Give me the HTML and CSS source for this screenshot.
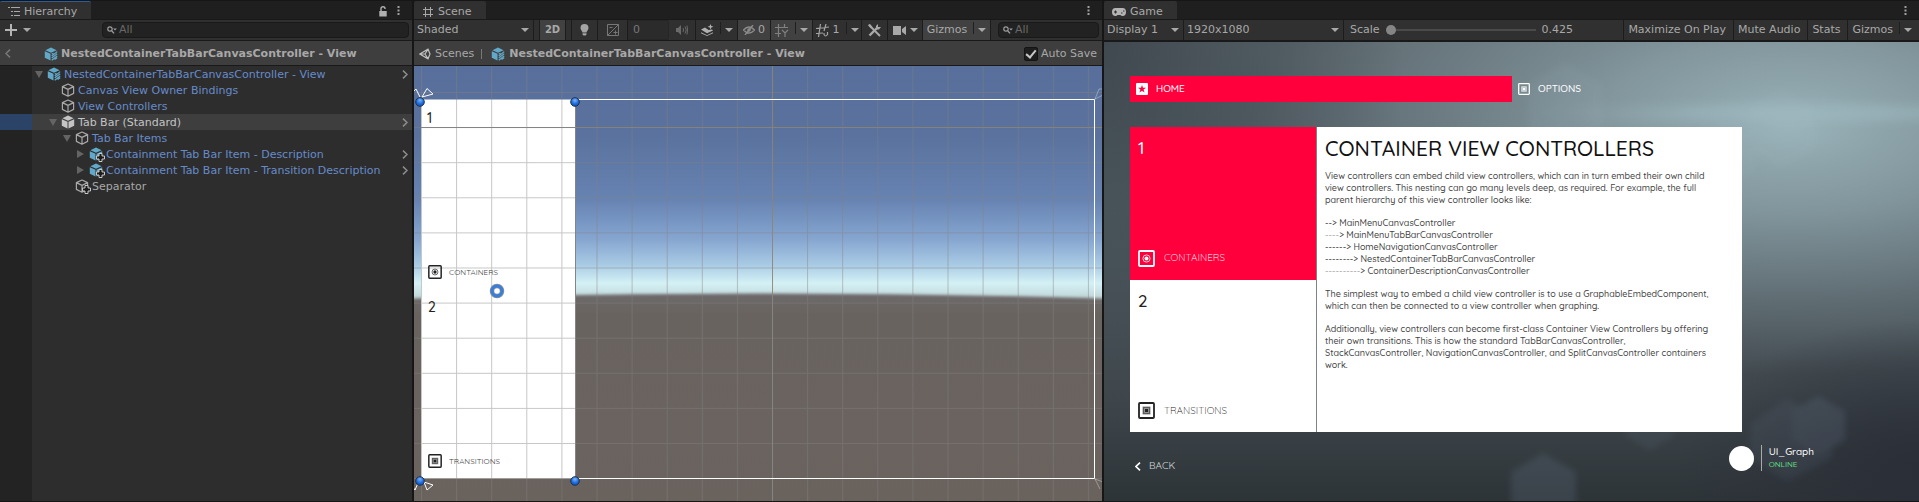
FILE: index.html
```
<!DOCTYPE html>
<html lang="en">
<head>
<meta charset="utf-8">
<title>Editor</title>
<link rel="stylesheet" href="styles.css">
</head>
<body>
<svg class="defs" aria-hidden="true">
  <defs>
    <symbol id="cube-outline" viewBox="0 0 14 14"><path d="M7 1 12.6 3.6V10.4L7 13.2 1.4 10.4V3.6ZM1.4 3.6 7 6.4 12.6 3.6M7 6.4V13.2" fill="none" stroke="#a8a8a8" stroke-width="1.2" stroke-linejoin="round"/></symbol>
    <symbol id="cube-solid" viewBox="0 0 14 14"><path d="M7 .6 12.6 3.2 7 5.8 1.4 3.2ZM.8 4.2 6.5 6.8V13.6L.8 10.8ZM13.2 4.2 7.5 6.8V13.6L13.2 10.8Z" fill="#c4c4c4"/></symbol>
    <symbol id="cube-blue" viewBox="0 0 14 14"><path d="M7 .6 12.6 3.2 7 5.8 1.4 3.2ZM.8 4.2 6.5 6.8V13.6L.8 10.8ZM13.2 4.2 7.5 6.8V13.6L13.2 10.8Z" fill="#62a9c9"/></symbol>
    <symbol id="cube-variant" viewBox="0 0 14 14"><path d="M7 .6 12.6 3.2 7 5.8 1.4 3.2ZM.8 4.2 6.5 6.8V13.6L.8 10.8Z" fill="#62a9c9"/><path d="M7.7 7 9.5 6.2M7.7 9 13.2 4.6M7.7 11 13.2 6.8M7.7 13.2 13.2 9M10.6 12.4 13.2 10.8" stroke="#62a9c9" stroke-width="1.2"/></symbol>
    <symbol id="plus-badge" viewBox="0 0 9 9"><path d="M3 .5h3V3h2.500v3H6v2.500H3V6H.5V3H3z" fill="#1c1c1c" stroke="#c8c8c8"/></symbol>
    <symbol id="search" viewBox="0 0 10 8"><circle cx="3" cy="3" r="2.2" fill="none" stroke="#a0a0a0" stroke-width="1.2"/><path d="M4.6 4.6 7 7.4" stroke="#a0a0a0" stroke-width="1.4"/><path d="M6.2 2.6h3.6L8 4.6z" fill="#a0a0a0"/></symbol>
    <symbol id="dots" viewBox="0 0 3 10"><path d="M0.5 0h2v2h-2zM.5 3.5h2v2h-2zM.5 7h2v2h-2z" fill="#a0a0a0"/></symbol>
    <symbol id="chev" viewBox="0 0 6 9"><path d="M1 .6 5 4.5 1 8.4" fill="none" stroke="#8c8c8c" stroke-width="1.5"/></symbol>
    <symbol id="box-square" viewBox="0 0 17 17"><rect x="1" y="1" width="15" height="15" rx="1" fill="none" stroke="currentColor" stroke-width="1.8"/><rect x="4.5" y="4.5" width="8" height="8" fill="currentColor" opacity=".5"/><rect x="5.5" y="5.5" width="6" height="6" fill="none" stroke="currentColor" opacity=".5"/><rect x="7" y="7" width="3" height="3" fill="currentColor"/></symbol>
    <symbol id="box-round" viewBox="0 0 17 17"><rect x="1" y="1" width="15" height="15" rx="1" fill="none" stroke="currentColor" stroke-width="1.8"/><circle cx="8.5" cy="8.5" r="3.6" fill="none" stroke="currentColor" opacity=".8"/><circle cx="8.5" cy="8.5" r="2" fill="currentColor"/></symbol>
  </defs>
</svg>

<main class="editor">
  <section class="panel hierarchy">
    <header class="tabstrip">
      <h2 class="tab tab-focus"><svg width="12" height="10" viewBox="0 0 12 10"><path d="M0 .5h2M3 .5h9M3 4.5h2M6 4.5h6M3 8.5h2M6 8.5h6" stroke="#a8a8a8" stroke-width="1.2"/></svg>Hierarchy</h2>
      <div class="tab-tools">
        <button class="icon-btn" aria-label="Lock"><svg width="8" height="11" viewBox="0 0 8 11"><path d="M2 5V2.6Q2 .8 4 .8T6 2.6V3" fill="none" stroke="#b0b0b0" stroke-width="1.4"/><path d="M.3 5h7.4v5.5H.3z" fill="#b0b0b0"/></svg></button>
        <button class="icon-btn" aria-label="Menu"><svg width="3" height="10"><use href="#dots"/></svg></button>
      </div>
    </header>
    <div class="toolbar">
      <button class="icon-btn add" aria-label="Create"><svg width="12" height="12" viewBox="0 0 12 12"><path d="M6 0v12M0 6h12" stroke="#b4b4b4" stroke-width="2"/></svg><i class="caret"></i></button>
      <label class="search wide"><svg width="10" height="8"><use href="#search"/></svg><input type="text" placeholder="All" aria-label="Search hierarchy"></label>
    </div>
    <div class="crumbs">
      <button class="icon-btn back-btn" aria-label="Back"><svg width="6" height="9" viewBox="0 0 6 9"><path d="M5 .6 1 4.5 5 8.4" fill="none" stroke="#777" stroke-width="1.5"/></svg></button>
      <svg width="14" height="14"><use href="#cube-variant"/></svg>
      <strong>NestedContainerTabBarCanvasController - View</strong>
    </div>
    <ul class="tree">
      <li class="row l0"><i class="fold open"></i><span class="ic"><svg width="14" height="14"><use href="#cube-variant"/></svg></span><span class="name">NestedContainerTabBarCanvasController - View</span><svg class="go" width="6" height="9"><use href="#chev"/></svg></li>
      <li class="row l1"><i class="fold"></i><span class="ic"><svg width="14" height="14"><use href="#cube-outline"/></svg></span><span class="name">Canvas View Owner Bindings</span></li>
      <li class="row l1"><i class="fold"></i><span class="ic"><svg width="14" height="14"><use href="#cube-outline"/></svg></span><span class="name">View Controllers</span></li>
      <li class="row l1 selected"><i class="fold open"></i><span class="ic"><svg width="14" height="14"><use href="#cube-solid"/></svg></span><span class="name">Tab Bar (Standard)</span><svg class="go" width="6" height="9"><use href="#chev"/></svg></li>
      <li class="row l2"><i class="fold open"></i><span class="ic"><svg width="14" height="14"><use href="#cube-outline"/></svg></span><span class="name">Tab Bar Items</span></li>
      <li class="row l3"><i class="fold closed"></i><span class="ic"><svg width="14" height="14"><use href="#cube-blue"/></svg><svg class="plus" width="9" height="9"><use href="#plus-badge"/></svg></span><span class="name">Containment Tab Bar Item - Description</span><svg class="go" width="6" height="9"><use href="#chev"/></svg></li>
      <li class="row l3"><i class="fold closed"></i><span class="ic"><svg width="14" height="14"><use href="#cube-blue"/></svg><svg class="plus" width="9" height="9"><use href="#plus-badge"/></svg></span><span class="name">Containment Tab Bar Item - Transition Description</span><svg class="go" width="6" height="9"><use href="#chev"/></svg></li>
      <li class="row l2 plain"><i class="fold"></i><span class="ic"><svg width="14" height="14"><use href="#cube-outline"/></svg><svg class="plus" width="9" height="9"><use href="#plus-badge"/></svg></span><span class="name">Separator</span></li>
    </ul>
  </section>

  <section class="panel scene">
    <header class="tabstrip">
      <h2 class="tab"><svg width="12" height="12" viewBox="0 0 12 12"><path d="M3.5 1v10M8.5 1v10M1 3.5h10M1 8.5h10" stroke="#a8a8a8"/></svg>Scene</h2>
      <div class="tab-tools"><button class="icon-btn" aria-label="Menu"><svg width="3" height="10"><use href="#dots"/></svg></button></div>
    </header>
    <div class="toolbar">
      <span class="pick shading"><select aria-label="Shading mode"><option>Shaded</option></select></span>
      <button class="tool two-d on">2D</button>
      <button class="tool light" aria-label="Lighting"><svg width="9" height="12" viewBox="0 0 9 12"><path d="M4.5 0a4 4 0 0 1 4 4c0 2-1.5 2.600-2 4.500h-4C2 6.600.5 6 .5 4a4 4 0 0 1 4-4zM2.500 9.200h4v1.200l-1 1.200h-2l-1-1.200z" fill="#a4a4a4"/></svg></button>
      <button class="tool expo" aria-label="Exposure"><svg width="12" height="12" viewBox="0 0 12 12"><path d="M.5.5h11v11H.5zM.5 11.500 11.500.5M2.500 3.500h3M6.500 8.500h4M8.500 6.500v4" fill="none" stroke="#777"/></svg></button>
      <input class="level" type="text" value="0" aria-label="Exposure value">
      <button class="tool audio" aria-label="Audio"><svg width="12" height="10" viewBox="0 0 12 10"><path d="M0 3h2l3-3v10l-3-3H0z" fill="#6a6a6a"/><path d="M7 3q1.200 2 0 4M9 1.500q2.500 3.500 0 7M11 .5q1 4.500 0 9" fill="none" stroke="#6a6a6a"/></svg></button>
      <button class="tool fx" aria-label="Effects"><svg width="13" height="12" viewBox="0 0 13 12"><path d="M0 5.500 4 3.500 7.500 6 11 5.500 12 6.500 6 9.300ZM0 8.300 6 11.200 12 8.300V9.300L6 12 0 9.300ZM9.500 0l.8 2 2.200.7-2.200.8-.8 2-.8-2-2.200-.8 2.200-.7z" fill="#b0b0b0"/></svg><i class="caret split"></i></button>
      <button class="tool hidden-count on"><svg width="12" height="10" viewBox="0 0 12 10"><path d="M.5 5Q6-1 11.500 5 6 11 .5 5ZM2 10 10 0" fill="none" stroke="#8c8c8c" stroke-width="1.300"/><circle cx="6" cy="5" r="1.800" fill="#8c8c8c"/></svg>0</button>
      <button class="tool axis on" aria-label="Grid axis"><svg width="14" height="13" viewBox="0 0 14 13"><path d="M3.500 0v13M9.500 0v4M0 3.500h13M0 9.500h6M7 6l3 3 3-3M10 9v4" fill="none" stroke="#808080" stroke-width="1.200"/></svg><i class="caret split"></i></button>
      <button class="tool snap"><svg width="13" height="13" viewBox="0 0 13 13"><path d="M4.500 0 2.500 13M10 0 8 7M0 4.500 13 3M0 9.500 7 9M8 9v1.500q1.500 3 3.500 0V8" fill="none" stroke="#a4a4a4" stroke-width="1.200"/></svg>1<i class="caret split"></i></button>
      <button class="tool tools" aria-label="Tools"><svg width="13" height="13" viewBox="0 0 13 13"><path d="M1 1 12 12" stroke="#a8a8a8" stroke-width="2"/><path d="M1.500 11.500 9 4" stroke="#a8a8a8" stroke-width="2.400"/><path d="M8 4.500V2l2-2v3h3l-2 2.500H9zM0 1l2-1 2.500 3L3 4.500z" fill="#a8a8a8"/></svg></button>
      <button class="tool cam" aria-label="Camera"><svg width="13" height="9" viewBox="0 0 13 9"><path d="M0 0h8v9H0zM9 3l4-3v9L9 6z" fill="#a8a8a8"/></svg><i class="caret"></i></button>
      <button class="tool gizmo on">Gizmos<i class="caret split"></i></button>
      <label class="search"><svg width="10" height="8"><use href="#search"/></svg><input type="text" placeholder="All" aria-label="Search scene"></label>
    </div>
    <div class="crumbs scene-crumbs">
      <svg width="12" height="12" viewBox="0 0 12 12"><path d="M.8 6 9 1.200 11 6 9 10.800ZM.8 6H6M9 1.200 6 6 9 10.800" fill="none" stroke="#c0c0c0" stroke-width="1.200"/></svg>
      <a href="#">Scenes</a><i class="bar"></i>
      <svg width="14" height="14"><use href="#cube-variant"/></svg>
      <strong>NestedContainerTabBarCanvasController - View</strong>
      <label class="autosave"><input type="checkbox" checked>Auto Save</label>
    </div>
    <div class="viewport">
      <svg class="view" viewBox="414 66 688 435" preserveAspectRatio="xMidYMid slice" role="img" aria-label="Scene view">
        <defs>
          <linearGradient id="sky" x1="0" y1="66" x2="0" y2="297" gradientUnits="userSpaceOnUse">
            <stop offset="0" stop-color="#576f9a"/><stop offset=".3" stop-color="#5a729d"/><stop offset=".58" stop-color="#6783b2"/><stop offset=".75" stop-color="#86a6d0"/><stop offset=".86" stop-color="#a9cae4"/><stop offset=".94" stop-color="#d4f1f5"/><stop offset="1" stop-color="#c2d8da"/>
          </linearGradient>
          <linearGradient id="ground" x1="0" y1="294" x2="0" y2="501" gradientUnits="userSpaceOnUse">
            <stop offset="0" stop-color="#6d686a"/><stop offset=".1" stop-color="#69645f"/><stop offset="1" stop-color="#6a625d"/>
          </linearGradient>
          <radialGradient id="knob" cx=".5" cy=".3" r=".7"><stop offset="0" stop-color="#7db4f5"/><stop offset=".6" stop-color="#1c6ce0"/><stop offset="1" stop-color="#0d50b8"/></radialGradient>
          <filter id="haze"><feGaussianBlur stdDeviation="0 1.600"/></filter>
          <pattern id="grid" x="421" y="92" width="35.100" height="35.100" patternUnits="userSpaceOnUse"><path d="M.5 0V35.100M0 .5H35.100" stroke="#808080" stroke-opacity=".45"/></pattern>
        </defs>
        <rect x="414" y="66" width="688" height="435" fill="url(#sky)"/>
        <path d="M394 299Q760 288 1122 299V520H394Z" fill="url(#ground)" filter="url(#haze)"/>
        <path d="M421 99.500H575.500V478.500H421Z" fill="#fff"/>
        <rect x="414" y="66" width="688" height="435" fill="url(#grid)"/>
        <path d="M772.500 66V294M576 127.500H1102" stroke="#8f8470" stroke-opacity=".8"/>
        <path d="M772.500 294V501M421 127.500H576M575.500 102V478" stroke="#848484"/>
        <path d="M576 99.500H1094.500V478.500H576" fill="none" stroke="#fff"/>
        <g fill="none" stroke="#fff">
          <path d="M422 97 427 88.500 433 94ZM420 97 416 89 413 92M424 482 433 485 427 490ZM418 483 415 490 412 486"/>
          <path d="M1095 99 1099 89H1103M1095 99 1103 95M1095 479 1103 482M1095 479 1100 489" opacity=".35"/>
        </g>
        <g fill="url(#knob)" stroke="#1e3350"><circle cx="420" cy="102" r="4.300"/><circle cx="575" cy="102" r="4.300"/><circle cx="420" cy="481" r="4.300"/><circle cx="575" cy="481" r="4.300"/></g>
        <circle cx="497" cy="291" r="5" fill="#fff" stroke="#8a8f98" stroke-width="4.500"/><circle cx="497" cy="291" r="5" fill="none" stroke="#3a7edb" stroke-width="3"/>
        <g color="#222"><use href="#box-round" x="428" y="265" width="14" height="14"/><use href="#box-square" x="428" y="454" width="14" height="14"/></g>
        <g class="scene-text"><text x="427" y="123" class="scene-num">1</text><text x="428" y="312" class="scene-num">2</text><text x="449" y="275">CONTAINERS</text><text x="449" y="464">TRANSITIONS</text></g>
      </svg>
    </div>
  </section>

  <section class="panel game">
    <header class="tabstrip">
      <h2 class="tab"><svg width="14" height="8" viewBox="0 0 14 8"><path d="M3.500 0h7a3.500 4 0 0 1 0 8Q9 8 8.500 7h-3Q5 8 3.500 8a3.500 4 0 0 1 0-8Z" fill="#b4b4b4"/><path d="M2 4h3M3.500 2.500v3M9 5h1.500M11 3h1.500" stroke="#303030" stroke-width="1.200"/></svg>Game</h2>
      <div class="tab-tools"><button class="icon-btn" aria-label="Menu"><svg width="3" height="10"><use href="#dots"/></svg></button></div>
    </header>
    <div class="toolbar">
      <span class="pick display"><select aria-label="Display"><option>Display 1</option></select></span>
      <span class="pick size"><select aria-label="Resolution"><option>1920x1080</option></select></span>
      <label class="scale">Scale<input type="range" min="0" max="100" value="0"><output>0.425</output></label>
      <button class="tool">Maximize On Play</button>
      <button class="tool">Mute Audio</button>
      <button class="tool">Stats</button>
      <button class="tool">Gizmos<i class="caret split"></i></button>
    </div>
    <div class="stage">
      <svg class="backdrop" viewBox="1104 42 815 459" preserveAspectRatio="xMidYMid slice" aria-hidden="true">
        <defs>
          <linearGradient id="base" x1="0" y1="0" x2="0" y2="1"><stop offset="0" stop-color="#5c686e"/><stop offset=".35" stop-color="#56636a"/><stop offset=".75" stop-color="#41494e"/><stop offset="1" stop-color="#2d3438"/></linearGradient>
          <radialGradient id="glow" gradientUnits="userSpaceOnUse" cx="0" cy="0" r="1" gradientTransform="translate(1790 125) scale(540 250)"><stop offset="0" stop-color="#9ab3ba"/><stop offset=".35" stop-color="#90a6ad" stop-opacity=".75"/><stop offset="1" stop-color="#7e9096" stop-opacity="0"/></radialGradient>
          <radialGradient id="edge" gradientUnits="userSpaceOnUse" cx="0" cy="0" r="1" gradientTransform="translate(1104 42) scale(300 420)"><stop offset="0" stop-color="#394148" stop-opacity=".8"/><stop offset="1" stop-color="#394148" stop-opacity="0"/></radialGradient>
          <radialGradient id="corner" gradientUnits="userSpaceOnUse" cx="0" cy="0" r="1" gradientTransform="translate(1919 470) scale(240 150)"><stop offset="0" stop-color="#2a2e37"/><stop offset="1" stop-color="#2a2e37" stop-opacity="0"/></radialGradient>
          <filter id="soft"><feGaussianBlur stdDeviation="3"/></filter>
          <filter id="streak" x="-1" y="-3" width="3" height="7"><feGaussianBlur stdDeviation="60 6"/></filter>
        </defs>
        <rect x="1104" y="42" width="815" height="459" fill="url(#base)"/>
        <rect x="1104" y="42" width="815" height="459" fill="url(#glow)"/>
        <rect x="1104" y="42" width="815" height="459" fill="url(#edge)"/>
        <rect x="1104" y="42" width="815" height="459" fill="url(#corner)"/>
        <rect x="1640" y="106" width="340" height="14" fill="#a9c6ce" opacity=".4" filter="url(#streak)"/>
        <g filter="url(#soft)" fill="#6f7f96" opacity=".2">
          <path d="M1543 453 1576 472V510H1511V472Z"/>
          <path d="M1818 396 1845 411V440L1818 455 1792 440V411Z"/>
          <path d="M1787 398 1832 424V458L1787 481 1750 458V424Z" opacity=".6"/>
          <path d="M1650 400 1674 412V436L1650 451 1626 436V412Z" opacity=".6"/>
        </g>
        <g filter="url(#soft)" fill="#a9c0c8" opacity=".08">
          <path d="M1565 62 1602 84V128L1565 150 1528 128V84Z"/><path d="M1725 118 1755 134V170L1725 188 1705 170V134Z"/><path d="M1782 88 1815 108V150L1782 168 1748 150V108Z"/>
        </g>
      </svg>
      <div class="screen">
        <nav class="tabs">
          <a class="nav-tab active" href="#"><svg width="12" height="12" viewBox="0 0 12 12"><rect width="12" height="12" rx="1" fill="#fff"/><path d="M6 2 7 4.800H10L7.600 6.500 8.500 9.500 6 7.700 3.500 9.500 4.400 6.500 2 4.800H5Z" fill="#ff0040"/></svg>HOME</a>
          <a class="nav-tab" href="#"><svg width="12" height="12"><use href="#box-square"/></svg>OPTIONS</a>
        </nav>
        <div class="card">
          <div class="side">
            <a class="side-tab active" href="#"><span class="num">1</span><span class="side-label"><svg width="17" height="17"><use href="#box-round"/></svg>CONTAINERS</span></a>
            <a class="side-tab" href="#"><span class="num">2</span><span class="side-label"><svg width="17" height="17"><use href="#box-square"/></svg>TRANSITIONS</span></a>
          </div>
          <article class="copy">
            <h1>CONTAINER VIEW CONTROLLERS</h1>
            <p>View controllers can embed child view controllers, which can in turn embed their own child<br>view controllers. This nesting can go many levels deep, as required. For example, the full<br>parent hierarchy of this view controller looks like:</p>
            <p>--&gt; MainMenuCanvasController<br><span class="faint">----</span>&gt; MainMenuTabBarCanvasController<br>------&gt; HomeNavigationCanvasController<br>--------&gt; NestedContainerTabBarCanvasController<br><span class="faint">----------</span>&gt; ContainerDescriptionCanvasController</p>
            <p>The simplest way to embed a child view controller is to use a GraphableEmbedComponent,<br>which can then be connected to a view controller when graphing.</p>
            <p>Additionally, view controllers can become first-class Container View Controllers by offering<br>their own transitions. This is how the standard TabBarCanvasController,<br>StackCanvasController, NavigationCanvasController, and SplitCanvasController containers<br>work.</p>
          </article>
        </div>
        <footer class="foot">
          <button class="back"><svg width="6" height="9" viewBox="0 0 6 9"><path d="M5 .6 1 4.500 5 8.400" fill="none" stroke="#fff" stroke-width="1.600"/></svg>BACK</button>
          <div class="user"><span class="avatar"></span><div class="who"><span>UI_Graph</span><span class="online">ONLINE</span></div></div>
        </footer>
      </div>
    </div>
  </section>
</main>
</body>
</html>
```
FILE: styles.css
```
* { box-sizing: border-box; }
body { margin: 0; background: #161616; color: #a8a8a8; font: 11px/16px "DejaVu Sans", sans-serif; }
svg { display: block; flex: none; }
.defs { position: absolute; width: 0; height: 0; }
button, select, input { font: inherit; color: inherit; margin: 0; padding: 0; border: 0; background: none; }
a { color: inherit; text-decoration: none; }

.editor { display: grid; grid-template-columns: 412fr 688fr 815fr; column-gap: 2px; height: 100vh; padding: 1px 0; }
.panel { display: flex; flex-direction: column; min-width: 0; background: #2d2d2d; overflow: hidden; }

.tabstrip { display: flex; justify-content: space-between; height: 18px; flex: none; background: #1f1f1f; }
.tab { display: flex; align-items: center; gap: 4px; margin: 0; padding: 3px 14px 0 8px; height: 19px; font-size: 11px; font-weight: 400; background: #303030; border-radius: 2px 2px 0 0; }
.tab-focus { border-top: 1px solid #2c5d9a; padding-top: 2px; }
.tab-tools { display: flex; align-items: center; gap: 10px; padding: 2px 12px 0 0; }
.icon-btn { display: flex; align-items: center; }

.toolbar { display: flex; flex: none; height: 22px; background: #303030; border: solid #191919; border-width: 1px 0; white-space: nowrap; }
.caret { flex: none; border: solid transparent; border-width: 4px 4px 0; border-top-color: #a8a8a8; }
.split { position: relative; margin-left: 4px; }
.split::before { content: ""; position: absolute; left: -9px; top: -10px; height: 12px; border-left: 1px solid #1f1f1f; }
.add { gap: 6px; padding-left: 5px; }
.search { display: flex; flex: 1; align-items: center; gap: 2px; min-width: 0; height: 16px; margin: 2px 3px 2px 7px; padding-left: 4px; background: #222; border: 1px solid #191919; border-radius: 4px; }
.search input { width: 100%; min-width: 0; outline: 0; }
.search.wide { margin-left: 71px; }
.search input::placeholder { color: #686868; opacity: 1; }

.crumbs { display: flex; flex: none; align-items: center; gap: 3px; height: 25px; padding: 1px 0 0 5px; background: #3e3e3e; border-bottom: 1px solid #191919; white-space: nowrap; }
.back-btn { margin-right: 30px; }
.scene-crumbs { gap: 4px; }
.bar { height: 10px; margin: 0 5px 0 3px; border-left: 1px solid #777; }
.autosave { display: flex; align-items: center; gap: 3px; margin-left: auto; padding-right: 5px; }
.autosave input { appearance: none; display: grid; place-items: center; width: 14px; height: 14px; background: #1e1e1e; border: 1px solid #141414; border-radius: 2px; }
.autosave input:checked::after { content: ""; width: 4px; height: 8px; border: solid #c8c8c8; border-width: 0 2px 2px 0; rotate: 40deg; margin-bottom: 2px; }

.tree { flex: 1; margin: 0; padding: 0; list-style: none; background: linear-gradient(90deg, #232323 32px, #2d2d2d 32px); }
.row { display: flex; align-items: center; height: 16px; padding-right: 4px; color: #678bc9; white-space: nowrap; }
.name { padding-top: 1px; }
.l0 { padding-left: 35px; }
.l1 { padding-left: 49px; }
.l2 { padding-left: 63px; }
.l3 { padding-left: 77px; }
.plain { color: #a8a8a8; }
.selected { color: #c4c4c4; background: linear-gradient(90deg, #2b4366 32px, #3e3e3e 32px); }
.fold { width: 8px; margin-right: 4px; }
.fold.open { border: solid transparent; border-width: 7px 4px 0; border-top-color: #646464; }
.fold.closed { width: 7px; margin-right: 5px; border: solid transparent; border-width: 4px 0 4px 7px; border-left-color: #646464; }
.ic { position: relative; margin-right: 3px; }
.plus { position: absolute; right: -2px; bottom: -1px; }
.go { margin-left: auto; }

.tool { display: flex; align-items: center; justify-content: center; gap: 4px; padding: 0 5px; border-right: 1px solid #1c1c1c; }
.tool.on { background: #414141; }
.pick { position: relative; display: flex; border-right: 1px solid #1c1c1c; }
.pick select { appearance: none; width: 100%; padding-left: 3px; outline: 0; }
.pick::after { content: ""; position: absolute; right: 4px; top: 8px; border: solid transparent; border-width: 4px 4px 0; border-top-color: #a8a8a8; pointer-events: none; }
.shading { width: 120px; margin-right: 5px; }
.two-d { width: 27px; margin-right: 5px; border-left: 1px solid #1c1c1c; font-weight: 700; font-size: 10px; }
.light { width: 27px; border-left: 1px solid #1c1c1c; }
.expo { width: 30px; }
.level { width: 41px; padding-left: 5px; color: #777; border: 1px solid #262626; border-width: 1px 1px 1px 0; border-radius: 2px; background: #2b2b2b; }
.audio { width: 27px; }
.fx { width: 42px; }
.hidden-count { width: 33px; gap: 3px; }
.axis { width: 42px; }
.snap { width: 49px; }
.tools { width: 26px; }
.cam { width: 35px; }
.gizmo { width: 68px; }
.toolbar .split { margin-left: 7px; }

.viewport { flex: 1; min-height: 0; }
.view { width: 100%; height: 100%; }
.scene-text { font: 8px "Quicksand", "Lato", sans-serif; fill: #444; }
.scene-num { font-size: 14px; font-weight: 500; fill: #222; }

.game .toolbar { height: 23px; border-bottom-width: 2px; }
.display { width: 80px; }
.size { width: 160px; }
.scale { display: flex; flex: 1; align-items: center; gap: 6px; padding-left: 6px; }
.scale input { appearance: none; width: 150px; height: 10px; background: linear-gradient(#4a4a4a, #4a4a4a) center / 100% 2px no-repeat; }
.scale input::-webkit-slider-thumb { appearance: none; width: 10px; height: 10px; border-radius: 50%; background: #858585; }
.game .tool { padding: 0 7px 0 4px; border-width: 0 0 0 1px; border-style: solid; border-color: #1c1c1c; }

.stage { position: relative; flex: 1; min-height: 0; }
.backdrop { position: absolute; inset: 0; width: 100%; height: 100%; }
.screen { position: relative; display: flex; flex-direction: column; height: 100%; padding: 34px 0 30px 26px; font-family: "Quicksand", "Lato", sans-serif; color: #fff; }
.tabs { display: grid; grid-template-columns: 382fr 230fr; width: 612px; max-width: 100%; height: 26px; margin-bottom: 25px; }
.nav-tab { display: flex; align-items: center; gap: 8px; padding-left: 6px; font-size: 10px; font-weight: 500; }
.active { background: #ff003c; color: #fff; }
.card { display: grid; grid-template-columns: 186px 1fr; flex: 1; width: 612px; max-width: 100%; min-height: 0; color: #222; background: #fff; }
.side { display: grid; grid-template-rows: 1fr 1fr; }
.side-tab { display: flex; flex-direction: column; justify-content: space-between; padding: 11px 8px 13px; }
.num { font-size: 17px; line-height: 20px; font-weight: 500; }
.side-label { display: flex; align-items: center; gap: 9px; font-size: 10px; font-weight: 300; }
.copy { padding: 7px 8px 0; border-left: 1px solid #7d8488; white-space: nowrap; }
.copy h1 { margin: 0 0 8px; font-size: 21px; line-height: 28px; font-weight: 500; color: #111; }
.copy p { margin: 0 0 11px; font-size: 9px; line-height: 12px; font-weight: 500; color: #444; }
.faint { color: #aaa; }
.foot { display: flex; align-items: center; justify-content: space-between; height: 26px; margin-top: 13px; padding: 0 105px 0 5px; }
.back { display: flex; align-items: center; gap: 8px; padding-top: 16px; font-size: 10px; color: #d0d4d6; }
.user { display: flex; align-items: center; gap: 7px; }
.avatar { width: 25px; height: 25px; border-radius: 50%; background: #fff; }
.who { display: flex; flex-direction: column; padding-left: 7px; border-left: 1px solid #aaa; font-size: 10px; line-height: 13px; font-weight: 500; }
.online { font-size: 8px; color: #5fdc82; }
```
